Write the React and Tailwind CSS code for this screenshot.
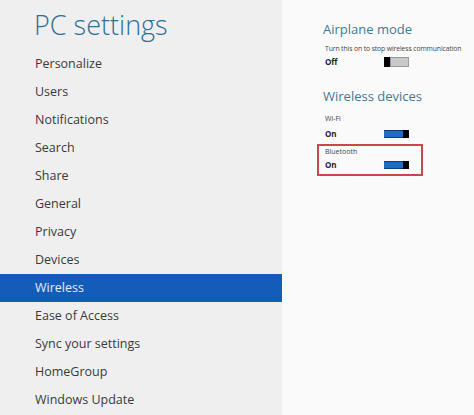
const menu = [
  "Personalize",
  "Users",
  "Notifications",
  "Search",
  "Share",
  "General",
  "Privacy",
  "Devices",
  "Wireless",
  "Ease of Access",
  "Sync your settings",
  "HomeGroup",
  "Windows Update",
];

function Toggle({ on }) {
  if (on) {
    return (
      <div className="flex h-[8px] w-[25px] items-stretch">
        <div className="flex-1 bg-[#1f6cc0] border-y border-[#0d3f80]" />
        <div className="w-[6px] bg-black" />
      </div>
    );
  }
  return (
    <div className="flex h-[10px] w-[25px] items-stretch">
      <div className="w-[6px] bg-black" />
      <div className="flex-1 bg-[#c9c9c9] border border-[#9a9a9a]" />
    </div>
  );
}

export default function App() {
  return (
    <div
      className="flex h-[415px] w-[474px] overflow-hidden bg-[#fafafa]"
      style={{ fontFamily: '"Open Sans", "Noto Sans", sans-serif' }}
    >
      <aside className="w-[282px] shrink-0 bg-[#efefef]">
        <h1 className="h-[50px] pl-[34px] pt-[8px] text-[27px] font-light leading-[34px] text-[#2e7096]">
          PC settings
        </h1>
        <ul>
          {menu.map((item) => (
            <li
              key={item}
              className={
                item === "Wireless"
                  ? "flex h-[28px] items-center bg-[#135cb8] pl-[35px] text-[12.5px] text-[#e4edf8]"
                  : "flex h-[28px] items-center pl-[35px] text-[12.5px] text-[#3a3a3a]"
              }
            >
              {item}
            </li>
          ))}
        </ul>
      </aside>

      <main className="flex-1 pl-[41px] pt-[18px]">
        <h2 className="text-[13px] leading-[22px] text-[#3f7896]">Airplane mode</h2>
        <div className="mt-[3px] whitespace-nowrap pl-[2px] text-[6.8px] tracking-[-0.1px] leading-[12px] text-[#444]">
          Turn this on to stop wireless communication
        </div>
        <div className="flex items-center">
          <span className="w-[61px] pl-[2px] text-[8px] font-bold leading-[14px] text-[#222]">Off</span>
          <Toggle on={false} />
        </div>

        <h2 className="mt-[16px] text-[13px] leading-[22px] text-[#3f7896]">
          Wireless devices
        </h2>
        <div className="mt-[5px] pl-[2px]">
          <div className="text-[7px] leading-[14px] text-[#444]">Wi-Fi</div>
          <div className="flex items-center">
            <span className="w-[59px] text-[8px] font-bold leading-[16px] text-[#222]">On</span>
            <Toggle on />
          </div>

          <div className="-ml-[8px] mt-[2px] w-[106px] border-2 border-[#c9474a] pb-[2px] pl-[6px]">
            <div className="text-[7px] leading-[12px] text-[#444]">Bluetooth</div>
            <div className="flex items-center">
              <span className="w-[59px] text-[8px] font-bold leading-[14px] text-[#222]">On</span>
              <Toggle on />
            </div>
          </div>
        </div>
      </main>
    </div>
  );
}
